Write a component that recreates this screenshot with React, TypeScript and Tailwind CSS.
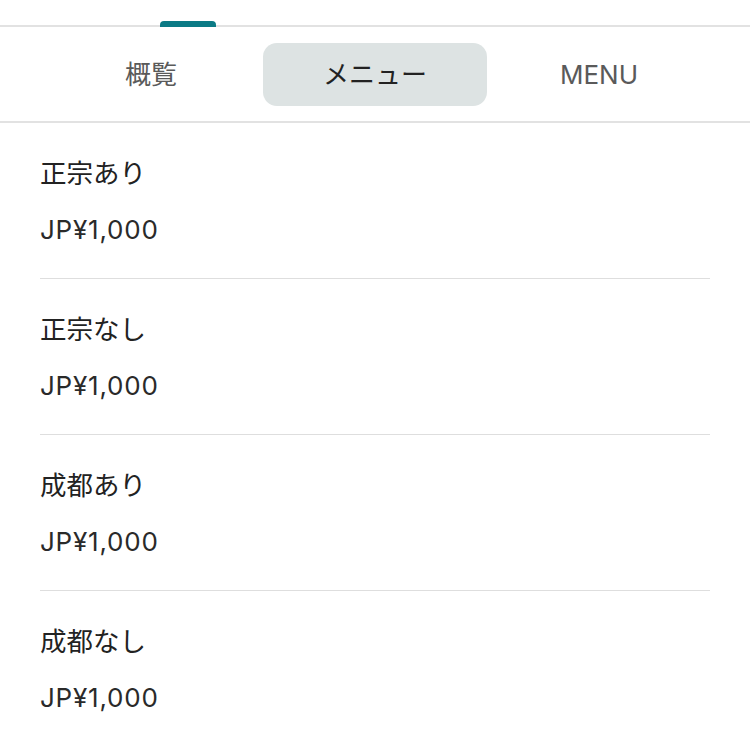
import React from 'react';

const tabs = ['概覧', 'メニュー', 'MENU'];

const items = [
  { name: '正宗あり', price: 'JP¥1,000' },
  { name: '正宗なし', price: 'JP¥1,000' },
  { name: '成都あり', price: 'JP¥1,000' },
  { name: '成都なし', price: 'JP¥1,000' },
];

const App = () => {
  const active = 1;

  return (
    <div className="w-[750px] h-[748px] bg-white overflow-hidden font-['Inter','Noto_Sans_CJK_JP',sans-serif]">
      {/* top strip with indicator */}
      <div className="relative h-[27px] border-b-2 border-[#e2e2e2]">
        <div className="absolute left-[160px] bottom-[-2px] w-[56px] h-[6px] rounded-t-[4px] bg-[#0b7a85]" />
      </div>

      {/* tabs */}
      <div className="grid grid-cols-3 items-center px-[39px] pt-4 pb-[15px] border-b-2 border-[#e2e2e2]">
        {tabs.map((tab, i) => (
          <div
            key={tab}
            className={`h-[63px] flex items-center justify-center rounded-[14px] text-[26px] ${
              i === active ? 'bg-[#dde3e3] text-[#222]' : 'text-[#5a5a5a]'
            }`}
          >
            {tab}
          </div>
        ))}
      </div>

      {/* menu list */}
      <div className="px-10">
        {items.map((item, idx) => (
          <div key={idx} className="pt-8 pb-[30px] border-b border-[#dedede] last:border-b-0">
            <div className="h-9 leading-9 text-[26.5px] text-[#222]">{item.name}</div>
            <div className="h-9 leading-9 mt-[21px] text-[26px] tracking-[0.03em] text-[#2a2a2a]">{item.price}</div>
          </div>
        ))}
      </div>
    </div>
  );
};

export default App;
